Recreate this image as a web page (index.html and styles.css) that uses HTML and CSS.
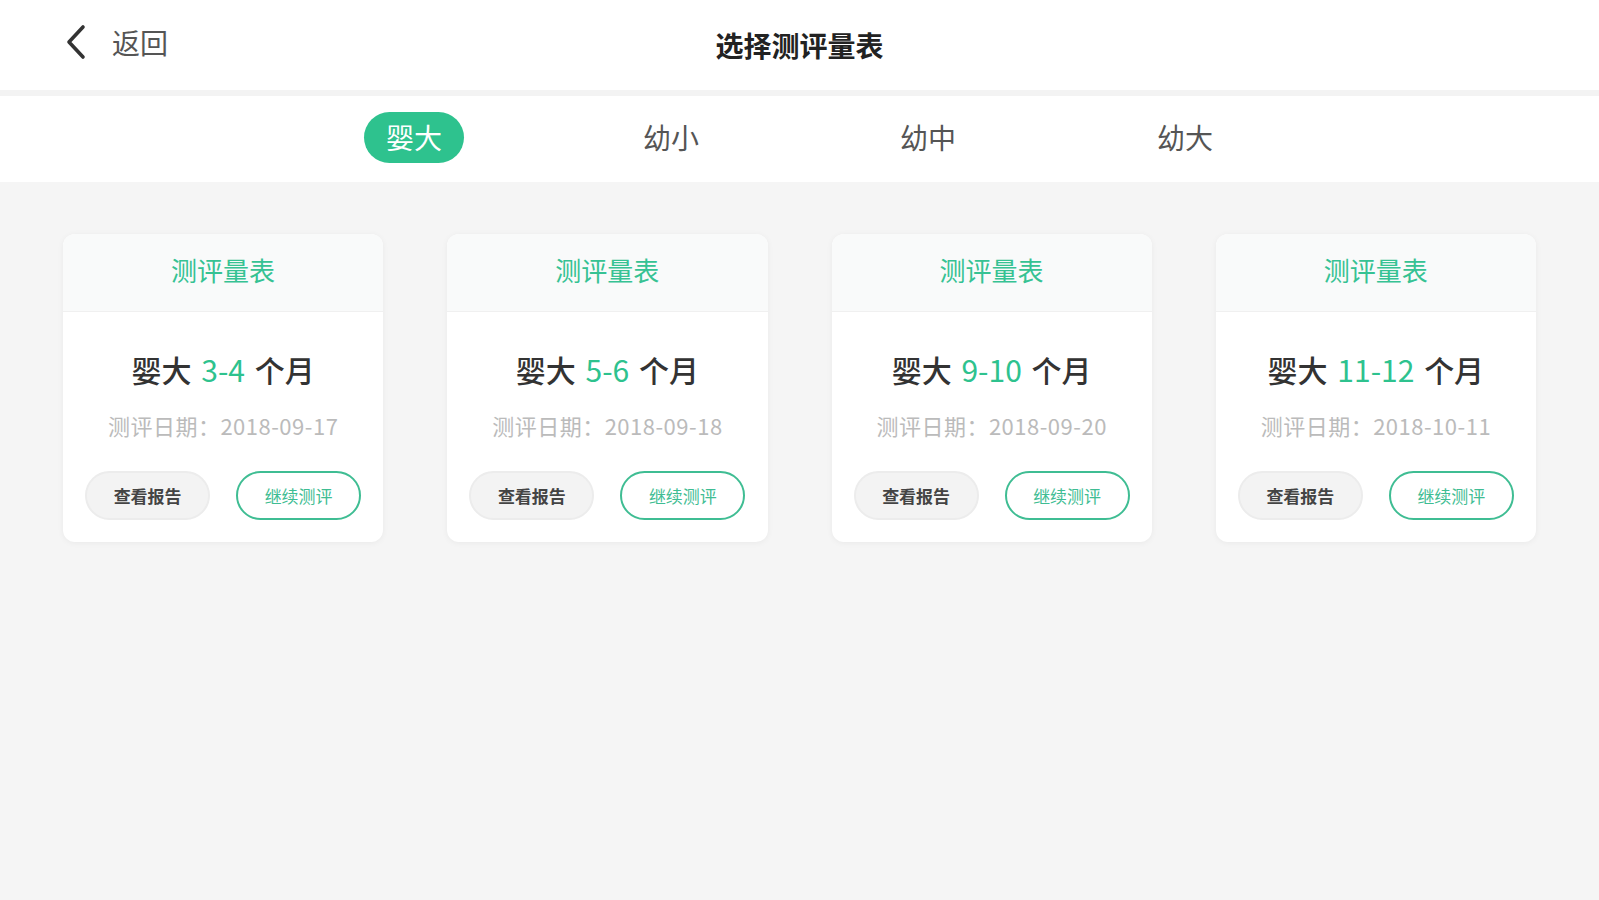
FILE: index.html
```html
<!DOCTYPE html>
<html lang="zh-CN">
<head>
    <meta charset="UTF-8">
    <meta name="viewport" content="width=device-width, initial-scale=1.0">
    <title>选择测评量表</title>
    <link rel="stylesheet" href="styles.css">
</head>
<body>
    <header class="topbar">
        <a class="back" href="#">
            <svg class="back-icon" width="24" height="36" viewBox="0 0 24 36">
                <path d="M19 3 L5 18 L19 33" fill="none" stroke="#333" stroke-width="3.6" stroke-linecap="round" stroke-linejoin="round"/>
            </svg>
            <span>返回</span>
        </a>
        <h1 class="title">选择测评量表</h1>
    </header>

    <nav class="tabs">
        <div class="tab"><span class="tab-label active">婴大</span></div>
        <div class="tab"><span class="tab-label">幼小</span></div>
        <div class="tab"><span class="tab-label">幼中</span></div>
        <div class="tab"><span class="tab-label">幼大</span></div>
    </nav>

    <main class="cards">
        <div class="card">
            <div class="card-head">测评量表</div>
            <div class="card-body">
                <div class="card-title">婴大 <em>3-4</em> 个月</div>
                <div class="card-date">测评日期：2018-09-17</div>
                <div class="card-actions">
                    <button class="btn btn-gray">查看报告</button>
                    <button class="btn btn-green">继续测评</button>
                </div>
            </div>
        </div>
        <div class="card">
            <div class="card-head">测评量表</div>
            <div class="card-body">
                <div class="card-title">婴大 <em>5-6</em> 个月</div>
                <div class="card-date">测评日期：2018-09-18</div>
                <div class="card-actions">
                    <button class="btn btn-gray">查看报告</button>
                    <button class="btn btn-green">继续测评</button>
                </div>
            </div>
        </div>
        <div class="card">
            <div class="card-head">测评量表</div>
            <div class="card-body">
                <div class="card-title">婴大 <em>9-10</em> 个月</div>
                <div class="card-date">测评日期：2018-09-20</div>
                <div class="card-actions">
                    <button class="btn btn-gray">查看报告</button>
                    <button class="btn btn-green">继续测评</button>
                </div>
            </div>
        </div>
        <div class="card">
            <div class="card-head">测评量表</div>
            <div class="card-body">
                <div class="card-title">婴大 <em>11-12</em> 个月</div>
                <div class="card-date">测评日期：2018-10-11</div>
                <div class="card-actions">
                    <button class="btn btn-gray">查看报告</button>
                    <button class="btn btn-green">继续测评</button>
                </div>
            </div>
        </div>
    </main>
</body>
</html>
```

FILE: styles.css
```css
body {
    font-family: "Noto Sans CJK SC", "Noto Sans", sans-serif;
    margin: 0;
    padding: 0;
    min-height: 100vh;
    background-color: #f5f5f5;
    color: #333;
}
.topbar {
    position: relative;
    height: 90px;
    background-color: white;
    border-bottom: 6px solid #f3f3f3;
    display: flex;
    align-items: center;
    justify-content: center;
}
.back {
    position: absolute;
    left: 64px;
    top: 22px;
    display: flex;
    align-items: center;
    gap: 24px;
    text-decoration: none;
    color: #555;
    font-size: 28px;
}
.title {
    margin: 0;
    font-size: 28px;
    font-weight: bold;
    color: #222;
}
.tabs {
    height: 86px;
    background-color: white;
    display: flex;
    justify-content: center;
    align-items: center;
}
.tab {
    width: 257px;
    display: flex;
    justify-content: center;
    margin-top: -4px;
}
.tab-label {
    font-size: 28px;
    color: #555;
    padding: 5px 22px;
    border-radius: 26px;
    line-height: 41px;
}
.tab-label.active {
    background-color: #2ec28e;
    color: white;
}
.cards {
    display: grid;
    grid-template-columns: repeat(4, 1fr);
    gap: 64px;
    padding: 52px 63px;
    align-items: start;
}
.card {
    background-color: white;
    border-radius: 12px;
    box-shadow: 0 1px 6px rgba(0, 0, 0, 0.05);
    overflow: hidden;
}
.card-head {
    height: 77px;
    line-height: 72px;
    text-align: center;
    background-color: #f9fafa;
    border-bottom: 1px solid #f0f0f0;
    color: #36c293;
    font-size: 26px;
}
.card-body {
    padding: 37px 22px 22px;
    text-align: center;
}
.card-title {
    font-size: 30px;
    font-weight: 500;
    color: #333;
    line-height: 40px;
}
.card-title em {
    font-style: normal;
    font-weight: normal;
    color: #2ec28e;
    margin: 0 3px;
}
.card-date {
    margin-top: 21px;
    font-size: 22px;
    letter-spacing: 0.5px;
    color: #bbb;
    line-height: 30px;
}
.card-actions {
    display: flex;
    justify-content: center;
    gap: 26px;
    margin-top: 31px;
}
.btn {
    width: 125px;
    height: 49px;
    border-radius: 25px;
    font-family: inherit;
    font-size: 17px;
    font-weight: bold;
    cursor: pointer;
    box-sizing: border-box;
}
.btn-gray {
    background-color: #f3f3f3;
    border: 2px solid #ececec;
    color: #444;
}
.btn-green {
    background-color: white;
    border: 2px solid #3fbd93;
    color: #3fbd93;
    font-weight: normal;
}
```
